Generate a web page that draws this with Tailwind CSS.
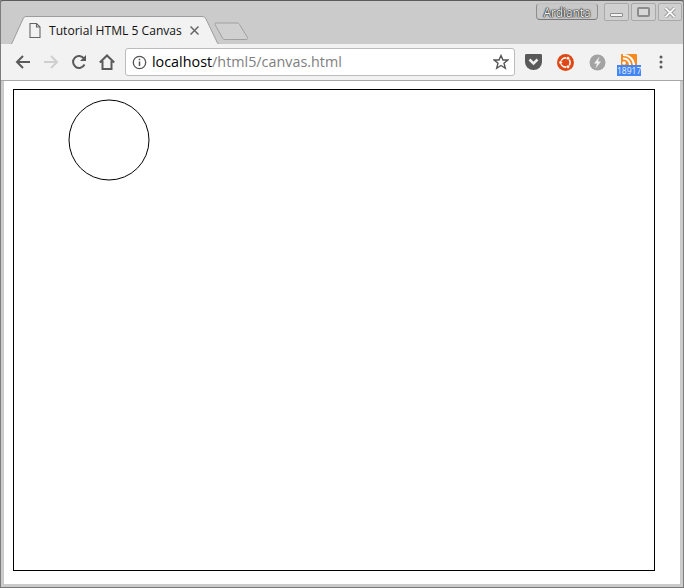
<!DOCTYPE html>
<html lang="en">
  <head>
    <meta charset="UTF-8" />
    <script src="https://cdn.jsdelivr.net/npm/@tailwindcss/browser@4"></script>
    <title>Tutorial HTML 5 Canvas</title>
  </head>
  <body class="m-0 bg-[#8a8a8a]">
    <div class="w-[684px] h-[588px] overflow-hidden flex flex-col bg-[#cbcbcb] border-t border-t-[#5c5c5c] border-x border-x-[#7d7d7d] border-b border-b-[#777] rounded-t-[3px] font-['Open_Sans','Noto_Sans',sans-serif]">
      <!-- tab strip -->
      <div class="relative h-[43px] shrink-0">
        <svg class="absolute left-0 top-0" width="682" height="44" viewBox="0 0 682 44">
          <path d="M3.500 43.500H8.500C10 43.500 11 42.500 11.500 41L22 18C22.600 16.500 23.500 15.500 25 15.500H201C203 15.500 204 16.500 205 18L216 41C216.500 42.500 217.500 43.500 219 43.500H681" fill="#f2f2f2" stroke="#9c9c9c" />
          <path d="M214 23.500C213.500 22.500 214 22 215 22H236C237 22 238 22.500 238.500 23.500L246.500 36.500C247 37.500 246.500 38.500 245.500 38.500H224C223 38.500 222 38 221.500 37Z" fill="#d0d0d0" stroke="#a0a0a0" />
        </svg>
        <div class="absolute left-[28px] top-[22px] flex items-center">
          <svg width="12" height="15" viewBox="0 0 12 15" fill="none" stroke="#666" stroke-width="1.100">
            <path d="M1 .5H7.500L11 4V14.500H1Z" />
            <path d="M7.500 .5V4H11" />
          </svg>
          <span class="ml-[8px] text-[12.100px] leading-[15px] text-[#111] whitespace-nowrap">Tutorial HTML 5 Canvas</span>
          <svg class="ml-[8px]" width="9" height="9" viewBox="0 0 9 9" stroke="#666" stroke-width="1.500">
            <path d="M.5 .5L8.500 8.500M8.500 .5L.5 8.500" />
          </svg>
        </div>
        <!-- window buttons -->
        <div class="absolute left-[535px] top-[2px] flex items-start">
          <div class="h-[17px] w-[62px] mr-[6px] pt-[2px] flex items-center justify-center rounded-[4px] border border-[#c0c0c0] border-x-[#8e8e8e] border-b-[#777] bg-[#c8c8c8] text-[11.800px] leading-none text-[#f4f4f4] [text-shadow:0_0_1px_#222,0_0_1px_#222,0_0_1px_#222,0_0_2px_#444]">Ardianta</div>
          <div class="h-[18px] w-[25px] mr-[2px] flex items-center justify-center rounded-[2px] border border-[#a8a8a8] bg-[#d0d0d0]">
            <div class="w-[13px] h-[4px] mt-[6px] bg-[#f4f4f4] border border-[#8c8c8c] rounded-[1px]"></div>
          </div>
          <div class="h-[18px] w-[25px] mr-[2px] flex items-center justify-center rounded-[2px] border border-[#a8a8a8] bg-[#d0d0d0]">
            <div class="w-[13px] h-[10px] border-2 border-[#8c8c8c] rounded-[2px] bg-[#d8d8d8]"></div>
          </div>
          <div class="h-[18px] w-[24px] flex items-center justify-center rounded-[2px] border border-[#a8a8a8] bg-[#d0d0d0]">
            <svg width="12" height="11" viewBox="0 0 12 11" fill="none">
              <path d="M1.500 1L10.500 10M10.500 1L1.500 10" stroke="#8a8a8a" stroke-width="3.500" />
              <path d="M1.500 1L10.500 10M10.500 1L1.500 10" stroke="#f6f6f6" stroke-width="2" />
            </svg>
          </div>
        </div>
      </div>
      <!-- toolbar -->
      <div class="h-[37px] shrink-0 flex items-center bg-[#f2f2f2] border-b border-b-[#a8a8a8] relative">
        <div class="w-[124px] shrink-0 flex items-center pl-[14px]">
          <svg width="16" height="14" viewBox="0 0 16 14" fill="none" stroke="#5a5a5a" stroke-width="2">
            <path d="M15 7H2M8 1L2 7L8 13" />
          </svg>
          <svg class="ml-[12px]" width="16" height="14" viewBox="0 0 16 14" fill="none" stroke="#cfcfcf" stroke-width="2">
            <path d="M1 7H14M8 1L14 7L8 13" />
          </svg>
          <svg class="ml-[12px]" width="16" height="16" viewBox="0 0 16 16" fill="none" stroke="#5a5a5a" stroke-width="2">
            <path d="M13.500 10.500A6 6 0 1 1 13 4.500" />
            <path d="M15 1V7H9Z" fill="#5a5a5a" stroke="none" />
          </svg>
          <svg class="ml-[12px]" width="16" height="16" viewBox="0 0 16 16" fill="none" stroke="#5a5a5a" stroke-width="2">
            <path d="M.8 8.500L8 1.500L15.200 8.500M3.500 7V15H12.500V7" />
          </svg>
        </div>
        <div class="w-[390px] h-[28px] shrink-0 flex items-center bg-white border border-[#bcbcbc] rounded-[3px] pl-[6px] pr-[5px]">
          <svg width="15" height="15" viewBox="0 0 15 15" fill="none" stroke="#555">
            <circle cx="7.500" cy="7.500" r="6.200" stroke-width="1.300" />
            <path d="M7.500 6.500V11" stroke-width="1.500" />
            <path d="M7.500 3.800V5.300" stroke-width="1.500" />
          </svg>
          <span class="ml-[5px] text-[14.350px] leading-none text-black whitespace-nowrap">localhost<span class="text-[#808080]">/html5/canvas.html</span></span>
          <svg class="ml-auto" width="16" height="16" viewBox="0 0 16 16" fill="none" stroke="#555" stroke-width="1.400">
            <path d="M8 1.500L10 6H14.800L11 9.300L12.300 14.300L8 11.500L3.700 14.300L5 9.300L1.200 6H6Z" />
          </svg>
        </div>
        <div class="flex items-center ml-[10px]">
          <svg width="17" height="16" viewBox="0 0 17 16">
            <path d="M0 1.500C0 .5 .5 0 1.500 0H15.500C16.500 0 17 .5 17 1.500V8A8.500 8 0 0 1 0 8Z" fill="#595959" />
            <path d="M4.500 5.500L8.500 9.500L12.500 5.500" fill="none" stroke="#eee" stroke-width="2.500" />
          </svg>
          <svg class="ml-[15px]" width="17" height="17" viewBox="0 0 17 17">
            <circle cx="8.500" cy="8.500" r="8.500" fill="#dd4814" />
            <circle cx="8.500" cy="8.500" r="4.600" fill="none" stroke="#fff" stroke-width="1.600" />
            <circle cx="3.600" cy="8.500" r="1.700" fill="#fff" stroke="#dd4814" stroke-width=".6" />
            <circle cx="11" cy="4.200" r="1.700" fill="#fff" stroke="#dd4814" stroke-width=".6" />
            <circle cx="11" cy="12.800" r="1.700" fill="#fff" stroke="#dd4814" stroke-width=".6" />
          </svg>
          <svg class="ml-[15px]" width="17" height="17" viewBox="0 0 17 17">
            <circle cx="8.500" cy="8.500" r="8" fill="#a3a3a3" />
            <path d="M10.500 2.500L5 9.500H8L6.500 14.500L12 7.500H9Z" fill="#f2f2f2" />
          </svg>
          <div class="relative ml-[11px] w-[24px] h-[22px] mt-[6px]">
            <svg class="absolute left-[4px] top-0" width="16" height="12" viewBox="0 0 16 12">
              <rect width="16" height="12" rx="1" fill="#f58a1f" />
              <circle cx="3" cy="9" r="1.800" fill="#fff" />
              <path d="M2 4.500A6.500 6.500 0 0 1 9 11M2 1A10.500 10.500 0 0 1 13 11" fill="none" stroke="#fff" stroke-width="2" />
            </svg>
            <div class="absolute left-0 top-[11px] w-[24px] h-[11px] bg-[#4285f4] text-[#e8f0ff] text-[8.500px] leading-[11px] text-center">18917</div>
          </div>
          <svg class="ml-[18px]" width="4" height="14" viewBox="0 0 4 14" fill="#5a5a5a">
            <circle cx="2" cy="2" r="1.500" />
            <circle cx="2" cy="7" r="1.500" />
            <circle cx="2" cy="12" r="1.500" />
          </svg>
        </div>
      </div>
      <!-- page -->
      <div class="flex-1 bg-white mx-[3px] mb-[3px] pl-[9px] pt-[8px]">
        <div class="w-[642px] h-[482px] border border-black">
          <svg width="640" height="480" viewBox="0 0 640 480">
            <circle cx="95" cy="50" r="40" fill="none" stroke="#000" />
          </svg>
        </div>
      </div>
    </div>
  </body>
</html>
